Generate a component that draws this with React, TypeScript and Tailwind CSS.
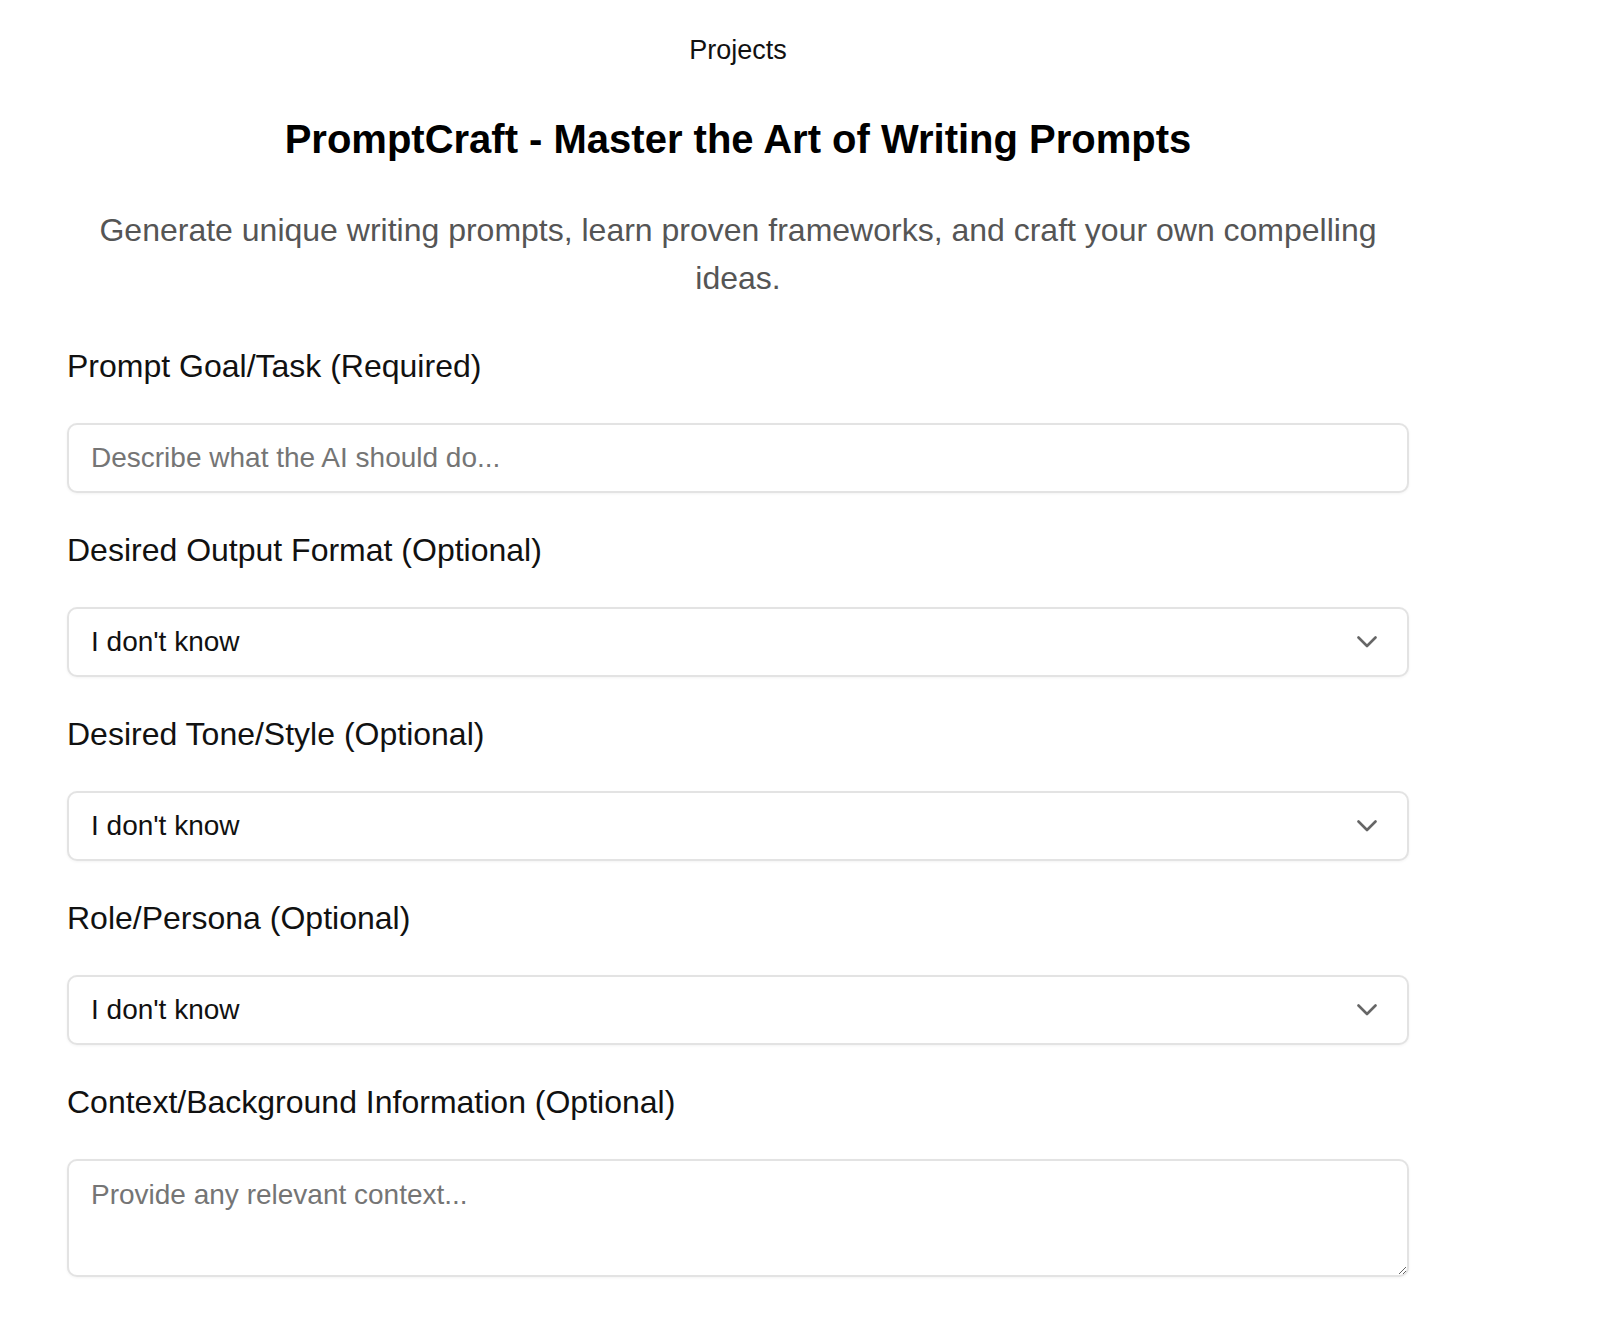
import React, { useState } from "react";

const options = ["I don't know", "Paragraph", "Bullet list", "Table", "JSON", "Step-by-step guide"];

function Chevron() {
    return (
        <svg width="20" height="12" viewBox="0 0 20 12" fill="none" className="pointer-events-none absolute right-[32px] top-1/2 -translate-y-1/2">
            <path d="M1.5 1.5 L10 10 L18.5 1.5" stroke="#666666" strokeWidth="2.6" strokeLinecap="round" strokeLinejoin="round" />
        </svg>
    );
}

function SelectField({ label, value, onChange }: { label: string; value: string; onChange: (v: string) => void }) {
    return (
        <div className="flex flex-col">
            <label className="text-[32px] leading-[48px] text-[#111] mb-[33px]">{label}</label>
            <div className="relative">
                <select
                    value={value}
                    onChange={(e) => onChange(e.target.value)}
                    className="w-full h-[70px] appearance-none rounded-[10px] border-2 border-[#e3e3e3] bg-white pl-[22px] pr-[70px] text-[28px] text-[#111] shadow-[0_1px_3px_rgba(0,0,0,0.05)] focus:outline-none"
                >
                    {options.map((o) => (
                        <option key={o} value={o}>{o}</option>
                    ))}
                </select>
                <Chevron />
            </div>
        </div>
    );
}

export default function App() {
    const [form, setForm] = useState({
        goal: "",
        format: "I don't know",
        tone: "I don't know",
        role: "I don't know",
        context: "",
        constraints: "",
    });

    return (
        <div className="min-h-screen bg-white font-['Liberation_Sans',Arial,sans-serif] text-[#111]">
            <div className="w-[1476px] px-[67px] pt-[34px] pb-20">
                <nav className="flex justify-center">
                    <a href="#" className="text-[27px] leading-[32px] text-[#111]">Projects</a>
                </nav>

                <h1 className="mt-[49px] text-center text-[40px] leading-[48px] font-bold text-black">
                    PromptCraft - Master the Art of Writing Prompts
                </h1>
                <p className="mt-[43px] text-center text-[32px] leading-[48px] text-[#555]">
                    Generate unique writing prompts, learn proven frameworks, and craft your own compelling ideas.
                </p>

                <form className="mt-[40px] flex flex-col gap-[33px]" onSubmit={(e) => e.preventDefault()}>
                    <div className="flex flex-col">
                        <label htmlFor="goal" className="text-[32px] leading-[48px] text-[#111] mb-[33px]">Prompt Goal/Task (Required)</label>
                        <input
                            id="goal"
                            type="text"
                            value={form.goal}
                            onChange={(e) => setForm({ ...form, goal: e.target.value })}
                            placeholder="Describe what the AI should do..."
                            className="w-full h-[70px] rounded-[10px] border-2 border-[#e3e3e3] bg-white px-[22px] text-[28px] text-[#111] placeholder:text-[#757575] shadow-[0_1px_3px_rgba(0,0,0,0.05)] focus:outline-none"
                        />
                    </div>

                    <SelectField label="Desired Output Format (Optional)" value={form.format} onChange={(v) => setForm({ ...form, format: v })} />
                    <SelectField label="Desired Tone/Style (Optional)" value={form.tone} onChange={(v) => setForm({ ...form, tone: v })} />
                    <SelectField label="Role/Persona (Optional)" value={form.role} onChange={(v) => setForm({ ...form, role: v })} />

                    <div className="flex flex-col">
                        <label htmlFor="context" className="text-[32px] leading-[48px] text-[#111] mb-[33px]">Context/Background Information (Optional)</label>
                        <textarea
                            id="context"
                            value={form.context}
                            onChange={(e) => setForm({ ...form, context: e.target.value })}
                            placeholder="Provide any relevant context..."
                            className="block w-full h-[118px] rounded-[10px] border-2 border-[#e3e3e3] bg-white px-[22px] pt-[18px] text-[28px] leading-[32px] text-[#111] placeholder:text-[#757575] shadow-[0_1px_3px_rgba(0,0,0,0.05)] focus:outline-none"
                        />
                    </div>

                    <div className="flex flex-col">
                        <label htmlFor="constraints" className="text-[32px] leading-[48px] text-[#111] mb-[33px]">Constraints/Limitations (Optional)</label>
                        <textarea
                            id="constraints"
                            value={form.constraints}
                            onChange={(e) => setForm({ ...form, constraints: e.target.value })}
                            placeholder="Any rules the AI must follow..."
                            className="block w-full h-[118px] rounded-[10px] border-2 border-[#e3e3e3] bg-white px-[22px] pt-[18px] text-[28px] leading-[32px] text-[#111] placeholder:text-[#757575] shadow-[0_1px_3px_rgba(0,0,0,0.05)] focus:outline-none"
                        />
                    </div>
                </form>
            </div>
        </div>
    );
}
